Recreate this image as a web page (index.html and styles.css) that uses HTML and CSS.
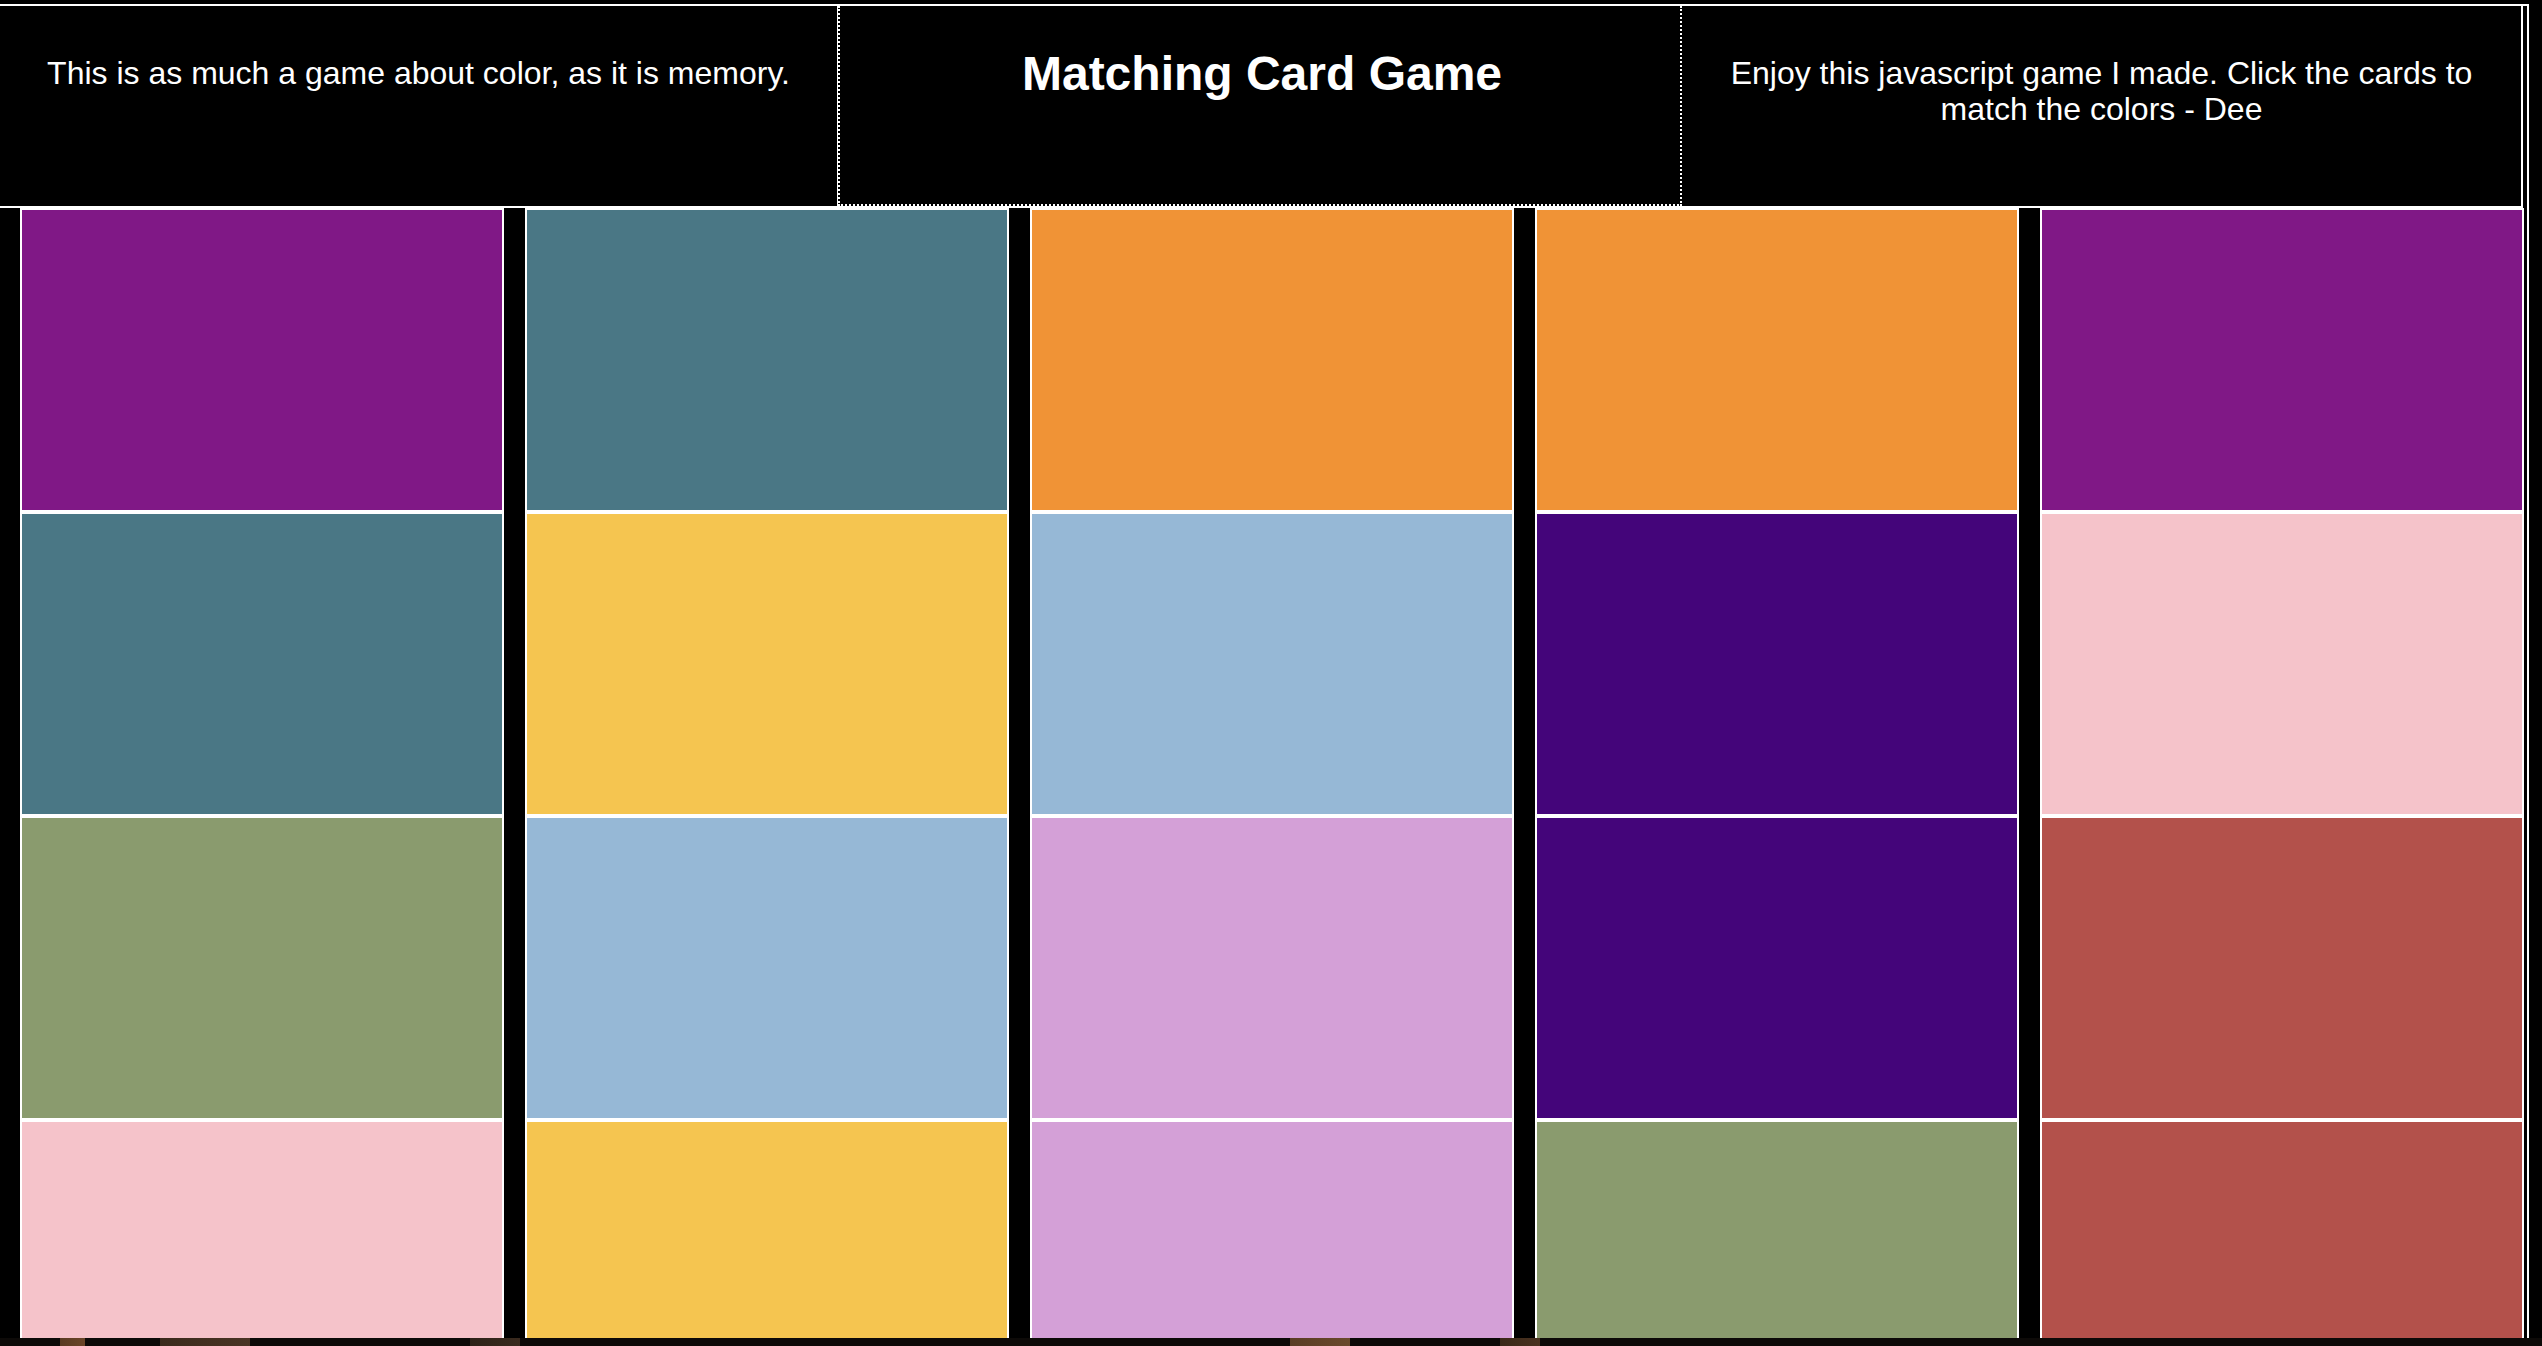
FILE: index.html
```html
<!DOCTYPE html>
<html lang="en">
<head>
<meta charset="utf-8">
<title>Matching Card Game</title>
<link rel="stylesheet" href="styles.css">
</head>
<body>
<div class="window">
  <div class="frame">
    <header class="header">
      <div class="cell cell-left"><p class="blurb">This is as much a game about color, as it is memory.</p></div>
      <div class="cell cell-mid"><h1 class="title">Matching Card Game</h1></div>
      <div class="cell cell-right"><p class="blurb">Enjoy this javascript game I made. Click the cards to<br>match the colors - Dee</p></div>
    </header>
    <main class="board">
      <div class="card c-purple"></div>
      <div class="card c-teal"></div>
      <div class="card c-orange"></div>
      <div class="card c-orange"></div>
      <div class="card c-purple"></div>

      <div class="card c-teal"></div>
      <div class="card c-yellow"></div>
      <div class="card c-blue"></div>
      <div class="card c-indigo"></div>
      <div class="card c-pink"></div>

      <div class="card c-green"></div>
      <div class="card c-blue"></div>
      <div class="card c-lilac"></div>
      <div class="card c-indigo"></div>
      <div class="card c-red"></div>

      <div class="card c-pink"></div>
      <div class="card c-yellow"></div>
      <div class="card c-lilac"></div>
      <div class="card c-green"></div>
      <div class="card c-red"></div>
    </main>
  </div>
</div>
<div class="desk"></div>
</body>
</html>
```
FILE: styles.css
```css
html, body {
  margin: 0;
  padding: 0;
  background: #000;
}

body {
  font-family: "Liberation Sans", Arial, Helvetica, sans-serif;
  color: #fff;
  overflow: hidden;
}

.window {
  height: 1338px;
  overflow: hidden;
  background: #000;
  border-radius: 0 0 10px 10px;
}

.frame {
  margin-top: 4px;
  width: 2527px;
  height: 1332px;
  border-top: 2px solid #fff;
  border-right: 2px solid #fff;
}

.header {
  display: grid;
  grid-template-columns: 838px 844px 841px;
  width: 2523px;
  height: 200px;
  border-bottom: 2px solid #fff;
}

.cell {
  box-sizing: border-box;
  text-align: center;
}

.cell-left {
  border-right: 1px solid #fff;
}

.cell-mid {
  border-left: 2px dotted #fff;
  border-right: 2px dotted #fff;
  border-bottom: 2px dotted #fff;
}

.cell-right {
  border-right: 2px solid #fff;
}

.blurb {
  margin: 0;
  padding: 49px 30px 0;
  font-size: 32px;
  line-height: 36px;
}

.title {
  margin: 0;
  padding: 40px 0 0 4px;
  font-size: 48px;
  font-weight: bold;
  line-height: 55px;
}

.board {
  display: grid;
  grid-template-columns: repeat(5, 484px);
  grid-auto-rows: 304px;
  column-gap: 21px;
  padding-left: 20px;
}

.card {
  box-sizing: border-box;
  border: 2px solid #fff;
}

.c-purple { background: #801886; }
.c-teal   { background: #4a7785; }
.c-orange { background: #f09336; }
.c-green  { background: #8a9b6e; }
.c-pink   { background: #f5c3ca; }
.c-yellow { background: #f5c550; }
.c-blue   { background: #96b8d6; }
.c-lilac  { background: #d4a0d7; }
.c-indigo { background: #44057a; }
.c-red    { background: #b3514b; }

.desk {
  height: 8px;
  background:
    linear-gradient(90deg,
      transparent 0, transparent 60px,
      #5a3a22 60px, #6b4528 85px,
      transparent 85px, transparent 160px,
      #3b2a1c 160px, #4a3424 250px,
      transparent 250px, transparent 470px,
      #2e2218 470px, #3a2a1e 520px,
      transparent 520px, transparent 1290px,
      #5a3c24 1290px, #6a4a2c 1350px,
      transparent 1350px, transparent 1500px,
      #3a2818 1500px, #4a3220 1540px,
      transparent 1540px),
    #0d0a08;
}
```
